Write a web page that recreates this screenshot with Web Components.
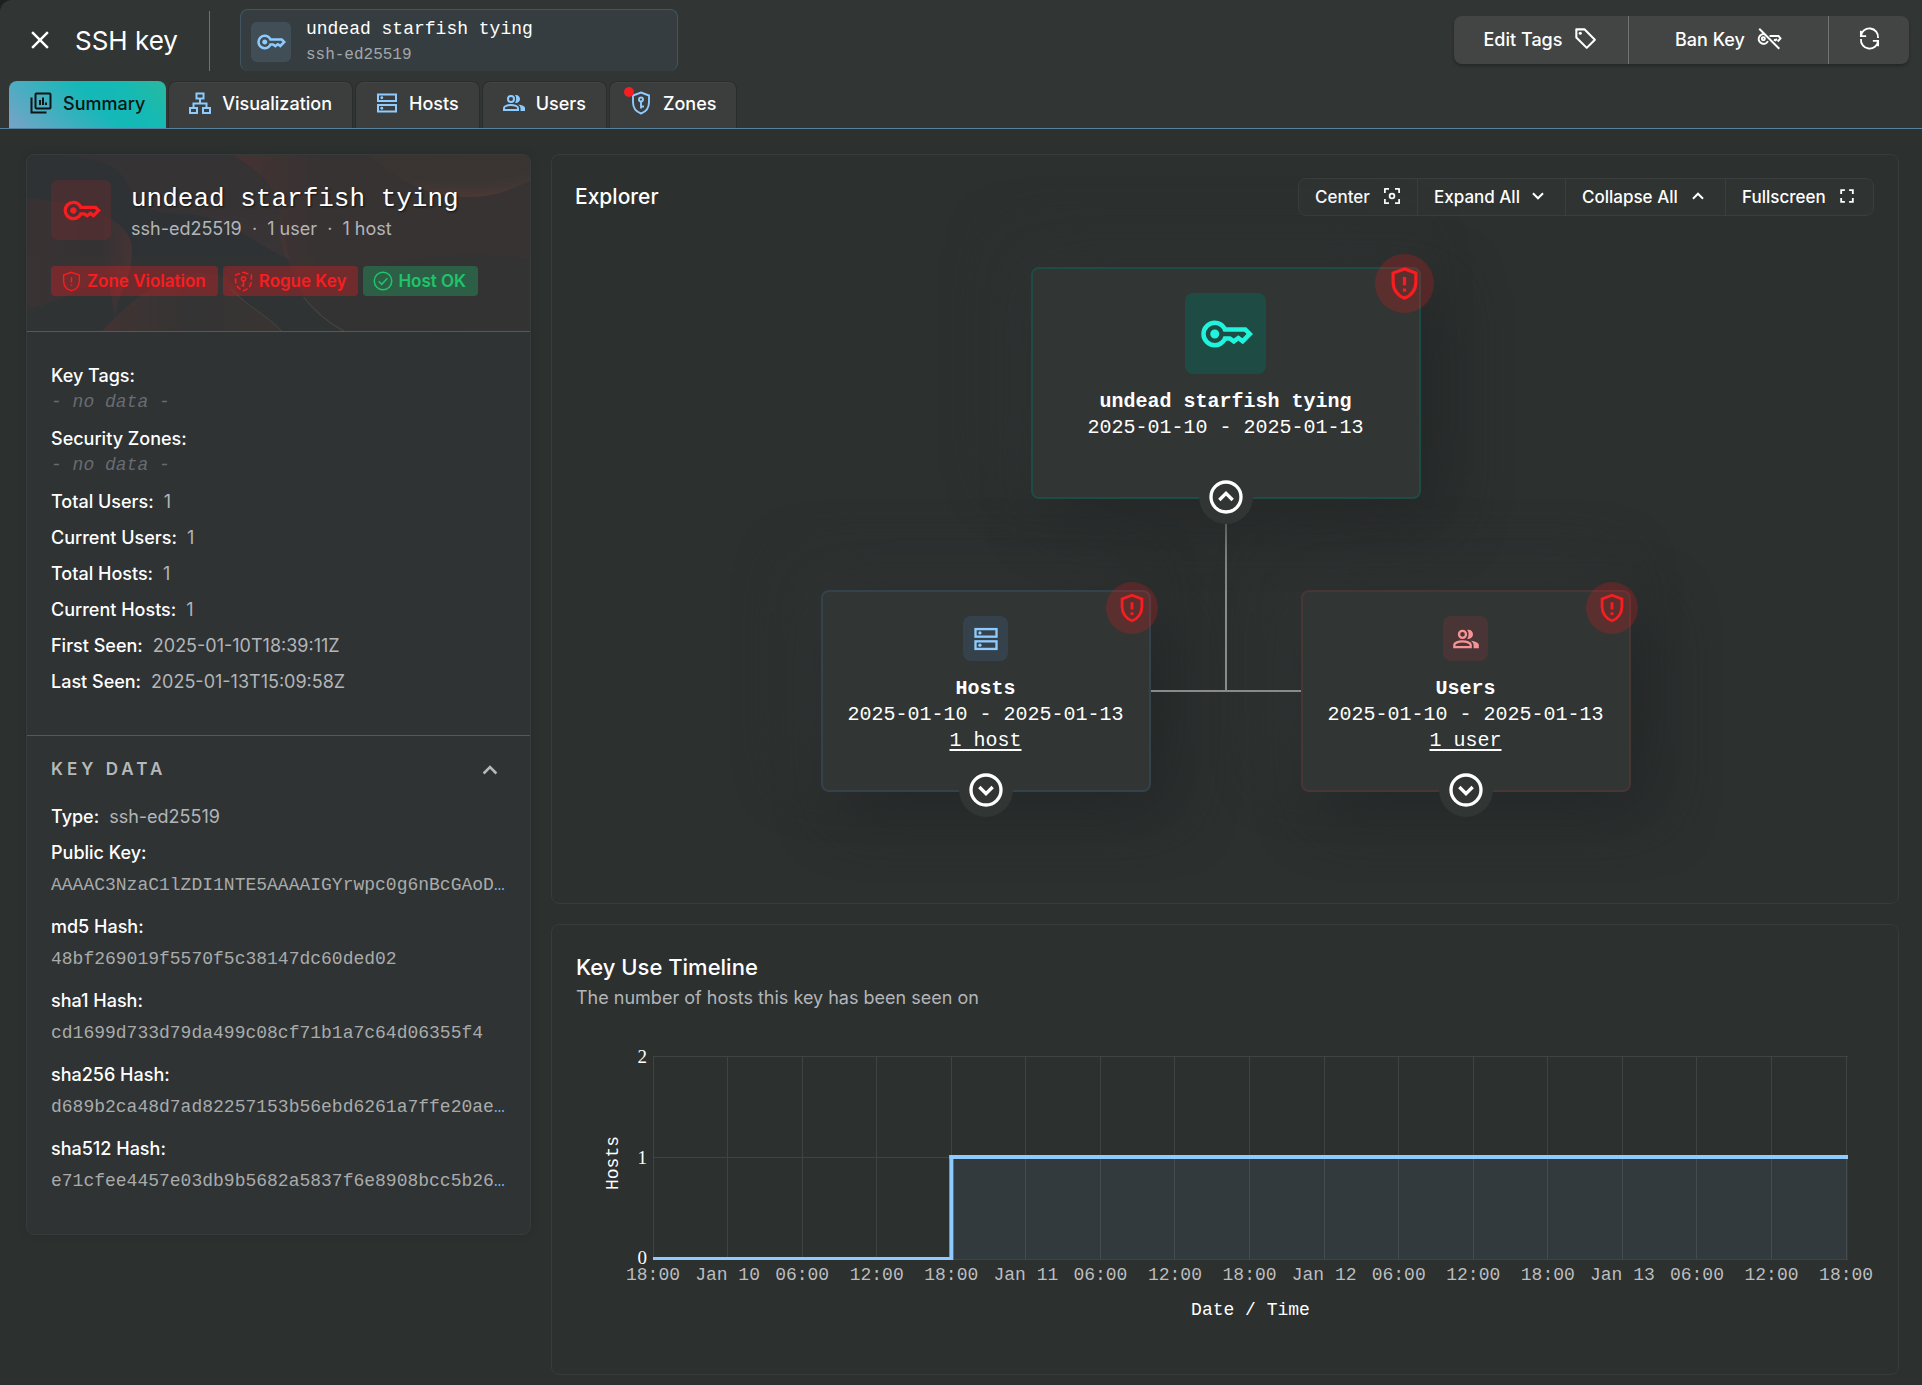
<!DOCTYPE html>
<html lang="en">
<head>
<meta charset="utf-8">
<title>SSH key – undead starfish tying</title>
<style>
  html { background: #1d2221; }
  body {
    margin: 0;
    color: #fff;
    font-family: Inter, "Liberation Sans", sans-serif;
    font-size: 18px;
    line-height: 27px;
    --mono: "Liberation Mono", monospace;
    --blue: #8ecbff;
    --red: #f71d20;
    --green: #1fc46b;
    --muted: #b3b5b8;
    --line: #373b3b;
    --panel: #2c302f;
    --raised: #313534;
  }
</style>
</head>
<body>
<ssh-key-page></ssh-key-page>

<script>
const define = (name, html, init) => {
  const template = document.createElement('template');
  template.innerHTML = html;
  customElements.define(name, class extends HTMLElement {
    constructor() {
      super();
      this.attachShadow({ mode: 'open' }).append(template.content.cloneNode(true));
    }
    connectedCallback() {
      if (init && !this.ready) { this.ready = true; init(this, this.shadowRoot); }
    }
  });
};

/* ---------- icons ---------- */
const stroke = (w, body) => `<g fill="none" stroke="currentColor" stroke-width="${w}">${body}</g>`;
const shield = 'M12 3 19 5.600V11.200C19 15.700 16.100 19.700 12 21 7.900 19.700 5 15.700 5 11.200V5.600Z';
const ICONS = {
  close: '<path d="M19 6.400 17.600 5 12 10.600 6.400 5 5 6.400 10.600 12 5 17.600 6.400 19 12 13.400 17.600 19 19 17.600 13.400 12z"/>',
  key: '<path d="M7 14q-.825 0-1.412-.588T5 12t.588-1.412T7 10t1.413.588T9 12t-.587 1.413T7 14m0 4q-2.500 0-4.250-1.750T1 12t1.750-4.250T7 6q1.675 0 3.038.825T12.200 9H21l3 3-4.500 4.500-2-1.500-2 1.500-2.125-1.500H12.200q-.8 1.350-2.162 2.175T7 18m0-2q1.400 0 2.463-.85T10.875 13H14l1.450 1.025L17.500 12.500l1.775 1.375L21.150 12l-1-1h-9.275q-.35-1.300-1.412-2.150T7 8Q5.350 8 4.175 9.175T3 12t1.175 2.825T7 16"/>',
  keyoff: stroke(1.8, '<path d="M8.300 7.600A4.500 4.500 0 1 0 11 14M12.500 9.300H20.800L22.600 11.500 20 14.300M16.500 12.500 18 13.200 19.300 12"/><circle cx="6.800" cy="11.800" r="1.400"/><path d="M3 2.500 21.500 21"/>'),
  tag: stroke(2, '<path stroke-linejoin="round" d="M3.200 3.200H11L21 13.200 13.200 21 3.200 11Z"/>') + '<circle cx="7" cy="7" r="1.500"/>',
  sync: stroke(1.9, '<path d="M3 9.500A9 9 0 0 1 20.900 11.500M21 14.500A9 9 0 0 1 3.100 12.500M3 4V9.500H8.500M21 20V14.500H15.500"/>'),
  summary: stroke(2, '<rect x="6.500" y="2.500" width="15" height="15" rx="1"/><path d="M2.500 6.500V21.500H17.500"/><path d="M11 14V9M14 14V6.500M17 14V11.500"/>'),
  tree: stroke(2, '<rect x="8.500" y="2.500" width="7" height="5"/><rect x="2" y="17" width="7" height="5"/><rect x="15" y="17" width="7" height="5"/><path d="M12 8V12.500M5.500 17V12.500H18.500V17"/>'),
  hosts: stroke(2, '<rect x="3" y="3.500" width="18" height="6.500"/><rect x="3" y="14" width="18" height="6.500"/>') + '<circle cx="6.800" cy="6.750" r="1.400"/><circle cx="6.800" cy="17.250" r="1.400"/>',
  users: stroke(2, '<circle cx="9" cy="8" r="3"/><path d="M2 19V17C2 15.300 5.500 14 9 14S16 15.300 16 17V19Z"/>') + '<path d="M14 12Q13.500 12 13 11.900 14.200 10.300 14.200 8T13 4.100Q13.500 4 14 4 15.700 4 16.800 5.200T18 8 16.800 10.800 14 12M18.500 20V17Q18.500 14.900 16.200 13.400 19 13.800 21 14.700T23 17V20Z"/>',
  zones: stroke(1.9, '<path d="M12 1.500 20 4.500V11C20 16.400 16.800 20.800 12 22.500 7.200 20.800 4 16.400 4 11V4.500Z"/>') + stroke(1.9, '<circle cx="12" cy="8.500" r="2"/><path d="M12 10.500V17.500M12 15.500H15"/>'),
  alert: stroke(2, `<path d="${shield}"/>`) + '<path d="M11 8h2v5h-2zM11 15h2v2h-2z"/>',
  alertthin: stroke(1.5, '<path d="M12 1.500 21 4.600V11C21 16.600 17.400 21 12 22.500 6.600 21 3 16.600 3 11V4.600Z"/>') + '<path d="M11.200 7h1.600v6h-1.600zM11.200 15h1.600v1.800h-1.600z"/>',
  rogue: stroke(1.8, '<path stroke-dasharray="6 2.800" d="M12 1.500 21 4.600V11C21 16.600 17.400 21 12 22.500 6.600 21 3 16.600 3 11V4.600Z"/><circle cx="12" cy="9" r="2.300"/><path d="M12 11V18M12 16.500H9.500"/>'),
  check: stroke(1.8, '<circle cx="12" cy="12" r="10.500"/><path d="M6.800 12.300 10.500 16 17.300 8.700"/>'),
  up: stroke(2.2, '<path d="M6.500 15 12 9.500 17.500 15"/>'),
  down: stroke(2.2, '<path d="M6.500 9 12 14.500 17.500 9"/>'),
  upcircle: stroke(2, '<circle cx="12" cy="12" r="9"/><path d="M8 13.800 12 9.800 16 13.800"/>'),
  downcircle: stroke(2, '<circle cx="12" cy="12" r="9"/><path d="M8 10.200 12 14.200 16 10.200"/>'),
  center: stroke(2.400, '<path stroke-linejoin="round" d="M2.500 8V2.500H8M16 2.500H21.500V8M21.500 16V21.500H16M8 21.500H2.500V16"/><circle cx="12" cy="12" r="3.200"/>'),
  full: stroke(2.200, '<path d="M5 9.500V5H9.500M14.500 5H19V9.500M19 14.500V19H14.500M9.500 19H5V14.500"/>')
};
define('ui-icon', `
  <style>:host{display:block;flex:none}svg{display:block;fill:currentColor;overflow:visible}</style>
  <svg viewBox="0 0 24 24" aria-hidden="true"></svg>`,
  (el, root) => {
    const svg = root.querySelector('svg');
    svg.style.width = svg.style.height = el.getAttribute('size') + 'px';
    svg.innerHTML = ICONS[el.getAttribute('name')];
  });

/* ---------- tile holding an icon ---------- */
define('icon-tile', `
  <style>
    :host{display:grid;place-items:center;flex:none;box-sizing:border-box;border-radius:6px}
    :host([tone=blue]){background:#414e56;color:var(--blue)}
    :host([tone=navy]){background:#36424b;color:var(--blue);border-radius:8px}
    :host([tone=red]){background:rgba(247,29,32,.13);color:var(--red)}
    :host([tone=rose]){background:#493535;color:#f79396;border-radius:8px}
    :host([tone=teal]){background:#1f4b45;color:#1ff5dc;border-radius:8px}
  </style><slot></slot>`,
  el => { el.style.width = el.style.height = el.getAttribute('size') + 'px'; });

/* ---------- header ---------- */
define('page-header', `
  <style>
    :host{display:flex;flex-direction:column;justify-content:space-between;height:128px;background:var(--raised);border-bottom:1px solid #56809c;border-radius:12px 0 0 0}
    .bar{display:flex;align-items:flex-start;padding:9px 13px 0 24px}
    .close{display:grid;place-items:center;width:32px;height:62px;padding:0;border:0;background:none;color:#fff}
    h1{margin:0 0 0 19px;font-size:26px;line-height:64px;font-weight:400}
    .rule{width:1px;height:60px;margin:2px 30px 0 31px;background:#6f7272}
    .chip{box-sizing:border-box;display:flex;align-items:center;gap:15px;width:438px;height:62px;padding:2px 10px 0;border:1px solid #425661;border-bottom:0;border-radius:8px;background:#363d40;font-family:var(--mono);line-height:26px}
    .chip small{display:block;font-size:16px;color:#a3a7a9}
    .actions{display:flex;margin:7px 0 0 auto;border-radius:8px;background:#424544;box-shadow:0 2px 3px #242828}
    .actions button{display:flex;align-items:center;justify-content:center;gap:11px;height:48px;padding:0;border:0;background:none;color:#fff;font:500 18px/24px Inter,sans-serif;width:200px}
    .actions button:first-child{width:174px}
    .actions button:last-child{width:81px}
    .actions button+button{border-left:1px solid #707373}
    .actions ui-icon{margin-bottom:3px}
    nav{display:flex;gap:2px;padding-left:9px}
  </style>
  <div class="bar">
    <button class="close" aria-label="Close"><ui-icon name="close" size="30"></ui-icon></button>
    <h1>SSH key</h1><div class="rule"></div>
    <div class="chip"><icon-tile tone="blue" size="40"><ui-icon name="key" size="30"></ui-icon></icon-tile>
      <div>undead starfish tying<small>ssh-ed25519</small></div></div>
    <div class="actions">
      <button>Edit Tags <ui-icon name="tag" size="25"></ui-icon></button>
      <button>Ban Key <ui-icon name="keyoff" size="26"></ui-icon></button>
      <button aria-label="Refresh"><ui-icon name="sync" size="23"></ui-icon></button>
    </div>
  </div>
  <nav>
    <page-tab active icon="summary">Summary</page-tab>
    <page-tab icon="tree">Visualization</page-tab>
    <page-tab icon="hosts">Hosts</page-tab>
    <page-tab icon="users">Users</page-tab>
    <page-tab icon="zones" alert>Zones</page-tab>
  </nav>`);

define('page-tab', `
  <style>
    :host{display:block}
    a{position:relative;display:flex;align-items:center;gap:10px;box-sizing:border-box;height:47px;padding:0 20px 4px 19px;border-radius:8px 8px 0 0;border:1px solid #292d2c;border-bottom:0;background:#3b3e3d;box-shadow:inset 0 1px #424544;color:#fff;font-size:18px;font-weight:500;text-decoration:none}
    ui-icon{color:var(--blue)}
    :host([active]) a{border-color:transparent;background:linear-gradient(45deg,#78a3c8,#14b8b8 55%,#14bab4 75%,#2ab89f) border-box;box-shadow:none;color:#0c1414}
    :host([active]) ui-icon{color:inherit}
    .dot{display:none;position:absolute;left:14px;top:5px;width:10px;height:10px;border-radius:50%;background:#f71d20}
    :host([alert]) .dot{display:block}
  </style><a href="#"><span class="icon"></span><slot></slot><span class="dot"></span></a>`,
  (el, root) => { root.querySelector('.icon').innerHTML = `<ui-icon name="${el.getAttribute('icon')}" size="24"></ui-icon>`; });

/* ---------- key summary card ---------- */
define('status-chip', `
  <style>
    :host{display:flex;align-items:center;gap:5px;height:30px;padding:0 12px 0 10px;border-radius:4px;font-size:17px;font-weight:600;background:rgba(247,29,32,.32);color:var(--red)}
    :host([ok]){background:#2d5f47;color:var(--green)}
  </style><slot></slot>`);

define('data-row', `
  <style>
    :host{display:flex;flex-wrap:wrap;column-gap:10px;padding-bottom:9px;font-size:18px;line-height:27px}
    dt{font-weight:500}
    dd{margin:0;color:var(--muted);min-width:0}
    :host([stack]) dd{flex-basis:100%;font-family:var(--mono);font-style:italic;color:#686b72}
    :host([hash]){row-gap:6px;padding-bottom:14px}
    :host([hash]) dd{flex-basis:100%;font-family:var(--mono);white-space:nowrap;color:#a9abab}
  </style><dt></dt><dd><slot></slot></dd>`,
  (el, root) => { root.querySelector('dt').textContent = el.getAttribute('label') + ':'; });

define('key-card', `
  <style>
    :host{display:block;border:1px solid var(--line);border-radius:8px;background:#2f3334;overflow:hidden;box-shadow:0 0 10px rgba(0,0,0,.1)}
    header{position:relative;padding:25px 24px 35px;border-bottom:1px solid #565959}
    .waves{position:absolute;inset:0;width:100%;height:100%;opacity:.75}
    .top,.chips{position:relative;display:flex}
    .top{gap:20px}
    h2{margin:0;font:400 26px/38px var(--mono);text-shadow:1px 1px 2px #111}
    p{margin:0;line-height:22px;color:var(--muted);font-size:18px;white-space:pre}
    .chips{gap:5px;margin-top:26px}
    dl{margin:0;padding:30px 24px 31px}
    .keys{padding:0 24px 25px}
    .toggle{display:flex;justify-content:space-between;align-items:center;width:100%;box-sizing:border-box;height:68px;padding:0 26px 0 24px;border:0;border-top:1px solid #565959;background:none;color:#b7b9b9;font:600 17px/27px Inter,sans-serif;letter-spacing:4px}
    i{font-style:normal;color:#6fb0ea}
  </style>
  <header>
    <svg class="waves" viewBox="0 0 502 176" preserveAspectRatio="none" aria-hidden="true">
      <defs>
        <linearGradient id="a" x1="0" y1="0" x2="0" y2="1"><stop offset="0" stop-color="#a03a30" stop-opacity=".07"/><stop offset="1" stop-color="#c0504a" stop-opacity=".11"/></linearGradient>
        <linearGradient id="b" x1="0" y1="0" x2="1" y2="0"><stop offset="0" stop-color="#d03038" stop-opacity=".18"/><stop offset=".3" stop-color="#a04030" stop-opacity=".06"/><stop offset="1" stop-color="#a04830" stop-opacity=".06"/></linearGradient>
        <linearGradient id="d" x1="0" y1="0" x2="1" y2="0"><stop offset="0" stop-color="#c03030" stop-opacity=".1"/><stop offset=".7" stop-color="#c03030" stop-opacity=".06"/><stop offset="1" stop-color="#e04040" stop-opacity=".18"/></linearGradient>
        <linearGradient id="e" x1="0" y1="0" x2="1" y2="0"><stop offset="0" stop-color="#c03838" stop-opacity=".18"/><stop offset=".5" stop-color="#a04838" stop-opacity=".07"/><stop offset="1" stop-color="#a04838" stop-opacity=".12"/></linearGradient>
        <radialGradient id="c" cx=".55" cy="0" r="1"><stop offset=".6" stop-color="#806030" stop-opacity=".05"/><stop offset="1" stop-color="#c05838" stop-opacity=".2"/></radialGradient>
      </defs>
      <path fill="url(#a)" d="M30 0C80 4 92 12 102 32S124 58 150 58 200 68 225 84 250 98 262 104L252 60C250 30 225 14 207 0Z"/>
      <path fill="url(#b)" d="M207 0C225 14 252 30 252 62S258 100 268 124 300 168 316 176H502V0Z"/>
      <path fill="#a04030" fill-opacity=".05" d="M207 0C225 14 252 30 252 62L262 104C280 130 310 116 350 110 400 100 450 96 502 104V0Z"/>
      <path fill="none" stroke="#8b8a60" stroke-opacity=".35" d="M276 142C290 160 303 169 316 176"/>
      <path fill="url(#c)" d="M340 0C376 26 396 42 440 42 470 42 488 32 502 26V0Z"/>
      <path fill="url(#d)" d="M0 44C60 46 98 64 104 88 108 122 92 130 88 162L80 120C70 120 60 140 0 154Z"/>
      <path fill="url(#e)" d="M75 176C100 150 130 120 175 118 210 118 206 138 222 150S244 166 254 176Z"/>
      <path fill="none" stroke="#8b7860" stroke-opacity=".25" d="M204 134C212 146 240 160 254 176"/>
    </svg>
    <div class="top">
      <icon-tile tone="red" size="60"><ui-icon name="key" size="39"></ui-icon></icon-tile>
      <div><h2>undead starfish tying</h2><p>ssh-ed25519  ·  1 user  ·  1 host</p></div>
    </div>
    <div class="chips">
      <status-chip><ui-icon name="alertthin" size="21"></ui-icon>Zone Violation</status-chip>
      <status-chip><ui-icon name="rogue" size="21"></ui-icon>Rogue Key</status-chip>
      <status-chip ok><ui-icon name="check" size="20"></ui-icon>Host OK</status-chip>
    </div>
  </header>
  <dl>
    <data-row stack label="Key Tags">- no data -</data-row>
    <data-row stack label="Security Zones">- no data -</data-row>
    <data-row label="Total Users">1</data-row>
    <data-row label="Current Users">1</data-row>
    <data-row label="Total Hosts">1</data-row>
    <data-row label="Current Hosts">1</data-row>
    <data-row label="First Seen">2025-01-10T18:39:11Z</data-row>
    <data-row label="Last Seen">2025-01-13T15:09:58Z</data-row>
  </dl>
  <button class="toggle">KEY DATA <ui-icon name="up" size="28"></ui-icon></button>
  <dl class="keys">
    <data-row label="Type">ssh-ed25519</data-row>
    <data-row hash label="Public Key">AAAAC3NzaC1lZDI1NTE5AAAAIGYrwpc0g6nBcGAoD<i>…</i></data-row>
    <data-row hash label="md5 Hash">48bf269019f5570f5c38147dc60ded02</data-row>
    <data-row hash label="sha1 Hash">cd1699d733d79da499c08cf71b1a7c64d06355f4</data-row>
    <data-row hash label="sha256 Hash">d689b2ca48d7ad82257153b56ebd6261a7ffe20ae<i>…</i></data-row>
    <data-row hash label="sha512 Hash">e71cfee4457e03db9b5682a5837f6e8908bcc5b26<i>…</i></data-row>
  </dl>`);

/* ---------- explorer ---------- */
define('tree-node', `
  <style>
    :host{position:relative;display:flex;flex-direction:column;align-items:center;box-sizing:border-box;width:330px;height:202px;padding-top:24px;border:2px solid #34424b;border-radius:8px;background:var(--raised);box-shadow:20px 20px 60px #242727,-20px -20px 60px #313534;font:20px/26px var(--mono)}
    :host([root]){width:390px;height:232px;border-color:#1f4b45}
    :host([rose]){border-color:#493535}
    ::slotted(icon-tile){margin-bottom:15px}
    .badge,.toggle{position:absolute;display:grid;place-items:center;border-radius:50%}
    .badge{top:-10px;right:-9px;width:52px;height:52px;background:rgba(247,29,32,.22);color:var(--red)}
    :host([root]) .badge{top:-15px;right:-15px;width:59px;height:59px}
    .toggle{left:50%;bottom:-27px;width:54px;height:54px;margin-left:-27px;padding:0;border:0;background:var(--raised);color:#fff}
  </style>
  <slot></slot><span class="badge"></span><button class="toggle" aria-label="Toggle branch"></button>`,
  (el, root) => {
    const isRoot = el.hasAttribute('root');
    root.querySelector('.badge').innerHTML = `<ui-icon name="alert" size="${isRoot ? 39 : 34}"></ui-icon>`;
    root.querySelector('.toggle').innerHTML = `<ui-icon name="${isRoot ? 'upcircle' : 'downcircle'}" size="40"></ui-icon>`;
  });

define('key-explorer', `
  <style>
    :host{display:block;box-sizing:border-box;border:1px solid var(--line);border-radius:8px;padding:23px 22px 111px 23px;background:var(--panel);overflow:hidden}
    header{display:flex;justify-content:space-between;align-items:center;margin-bottom:51px;padding-right:2px}
    h2{margin:0;font-size:21px;line-height:38px;font-weight:500}
    .tools{display:flex;border:1px solid #3a3e3d;border-radius:8px;background:#2f3332}
    .tools button{display:flex;align-items:center;justify-content:space-between;height:36px;padding:0 16px;border:0;background:none;color:#fff;font:500 17px/24px Inter,sans-serif;width:148px}
    .tools button:first-child{width:118px}
    .tools button:nth-child(3){width:160px}
    .tools button+button{border-left:1px solid #3a3e3d}
    .tools ui-icon{margin-bottom:2px}
    .tree{display:flex;flex-direction:column;align-items:center}
    .tree>tree-node{z-index:1}
    .stem{position:relative;width:2px;height:91px;background:#888b8a}
    .row{display:flex}
    .joint{position:relative;z-index:1;width:150px;background:linear-gradient(#888b8a,#888b8a) top/2px 50% no-repeat,linear-gradient(#888b8a,#888b8a) center/100% 2px no-repeat}
    a{color:inherit;text-underline-offset:3px}
  </style>
  <header><h2>Explorer</h2>
    <div class="tools">
      <button>Center <ui-icon name="center" size="18"></ui-icon></button>
      <button>Expand All <ui-icon name="down" size="22"></ui-icon></button>
      <button>Collapse All <ui-icon name="up" size="22"></ui-icon></button>
      <button>Fullscreen <ui-icon name="full" size="20"></ui-icon></button>
    </div>
  </header>
  <div class="tree">
    <tree-node root><icon-tile tone="teal" size="81"><ui-icon name="key" size="54"></ui-icon></icon-tile><b>undead starfish tying</b><span>2025-01-10 - 2025-01-13</span></tree-node>
    <div class="stem"></div>
    <div class="row">
      <tree-node><icon-tile tone="navy" size="45"><ui-icon name="hosts" size="28"></ui-icon></icon-tile><b>Hosts</b><span>2025-01-10 - 2025-01-13</span><a href="#">1 host</a></tree-node>
      <div class="joint"></div>
      <tree-node rose><icon-tile tone="rose" size="45"><ui-icon name="users" size="28"></ui-icon></icon-tile><b>Users</b><span>2025-01-10 - 2025-01-13</span><a href="#">1 user</a></tree-node>
    </div>
  </div>`);

/* ---------- timeline ---------- */
define('use-timeline', `
  <style>
    :host{display:block;box-sizing:border-box;border:1px solid var(--line);border-radius:8px;padding:25px 24px 49px;background:var(--panel)}
    h2{margin:0;font-size:22px;line-height:34px;font-weight:500}
    p{margin:0;line-height:27px;color:var(--muted)}
    .chart{margin:45px 26px 0 77px}
    svg{display:block;width:100%;height:269px;overflow:visible}
    .grid line{stroke:#3f4342;shape-rendering:crispEdges}
    .x{font:18px var(--mono);fill:#bbbdbf;text-anchor:middle}
    .y{font:19px "Liberation Serif",serif;fill:#fff;text-anchor:end}
    .title{font:18px var(--mono);fill:#fff;text-anchor:middle}
    .data{fill:var(--blue)}
  </style>
  <h2>Key Use Timeline</h2><p>The number of hosts this key has been seen on</p>
  <div class="chart"><svg role="img" aria-label="Hosts over time">
    <g class="grid"></g>
    <rect x="24.970%" y="101" width="75.030%" height="102" fill="#8ecbff" fill-opacity=".07"/>
    <g class="data"><rect x="0" y="201" width="25%" height="3"/><rect x="24.800%" y="99" width="4" height="105"/><rect x="24.800%" y="99" width="75.200%" height="4"/></g>
    <g class="y"><text x="-6" y="7">2</text><text x="-6" y="108">1</text><text x="-6" y="208">0</text></g>
    <g class="x"></g>
    <text class="title" x="50%" y="259">Date / Time</text>
    <text class="title" transform="translate(-35 107) rotate(-90)">Hosts</text>
  </svg></div>`,
  (el, root) => {
    const labels = ['18:00', 'Jan 10', '06:00', '12:00', '18:00', 'Jan 11', '06:00', '12:00', '18:00', 'Jan 12', '06:00', '12:00', '18:00', 'Jan 13', '06:00', '12:00', '18:00'];
    const at = i => (i * 6.24).toFixed(2) + '%';
    root.querySelector('.grid').innerHTML =
      [0, 101, 203].map(y => `<line x1="0" x2="100%" y1="${y}" y2="${y}"/>`).join('') +
      labels.map((_, i) => `<line x1="${at(i)}" x2="${at(i)}" y1="0" y2="203"/>`).join('');
    root.querySelector('.x').innerHTML = labels.map((t, i) => `<text x="${at(i)}" y="224">${t}</text>`).join('');
  });

/* ---------- page ---------- */
define('ssh-key-page', `
  <style>
    :host{display:block}
    main{display:grid;grid-template-columns:505px minmax(0,1fr);gap:20px;align-items:start;padding:25px 23px 10px 26px;background:var(--panel)}
    .side{display:flex;flex-direction:column;gap:20px}
  </style>
  <page-header></page-header>
  <main><key-card></key-card><div class="side"><key-explorer></key-explorer><use-timeline></use-timeline></div></main>`);
</script>
</body>
</html>
